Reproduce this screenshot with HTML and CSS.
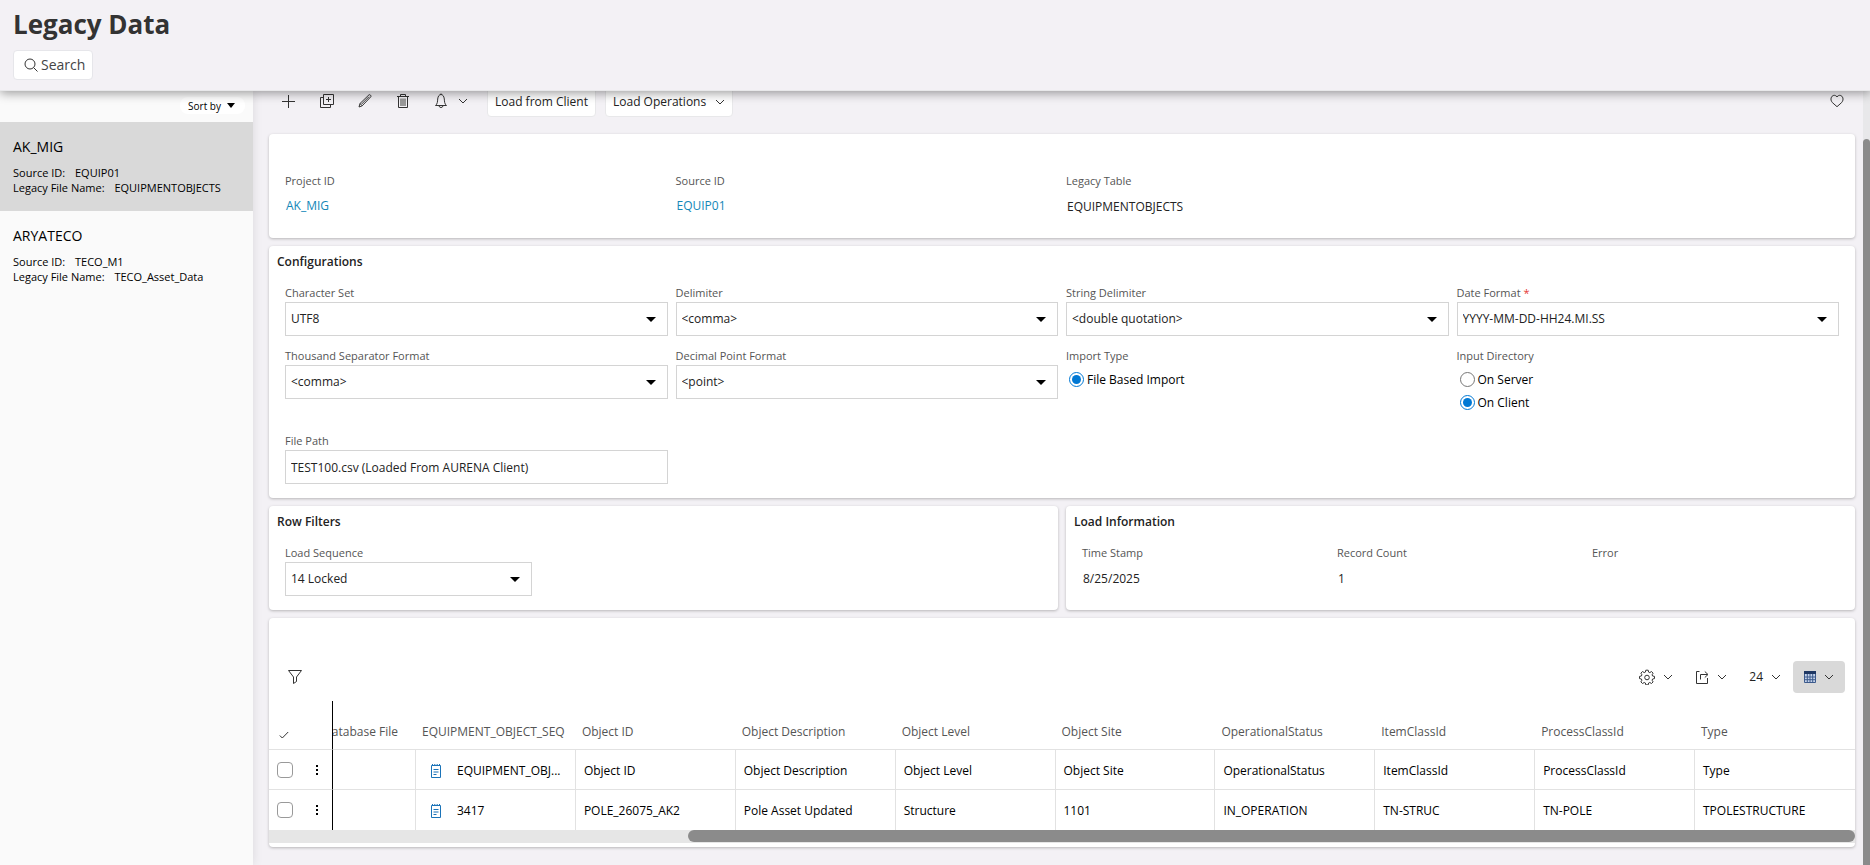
FILE: index.html
```html
<!DOCTYPE html>
<html lang="en">
  <head>
    <meta charset="utf-8">
    <title>Legacy Data</title>
    <link rel="stylesheet" href="styles.css">
  </head>

  <body>
    <!-- Shared icon shapes -->
    <svg class="sprite" aria-hidden="true">
      <symbol id="chevron" viewBox="0 0 10 6">
        <path d="M1 1l4 4 4-4" />
      </symbol>
      <symbol id="note" viewBox="0 0 12 16">
        <path d="M1.500 2.500h9v12h-9z" />
        <path d="M2.500 1v2M4.800 1v2M7.200 1v2M9.500 1v2M3.500 6.500h5M3.500 9h5M3.500 11.500h3" />
      </symbol>
    </svg>

    <header class="page-header">
      <h1>Legacy Data</h1>
      <button type="button" class="search-button">
        <svg class="icon" width="14" height="14" viewBox="0 0 14 14">
          <circle cx="6" cy="6" r="5" />
          <path d="M9.600 9.600L13.500 13.500" />
        </svg>
        Search
      </button>
    </header>

    <div class="page-body">
      <aside class="sidebar">
        <div class="sort-row">
          <button type="button" class="sort-button">Sort by <span class="caret"></span></button>
        </div>
        <ul class="record-list">
          <li class="selected">
            <h2>AK_MIG</h2>
            <p><span>Source ID:</span> EQUIP01</p>
            <p><span>Legacy File Name:</span> EQUIPMENTOBJECTS</p>
          </li>
          <li>
            <h2>ARYATECO</h2>
            <p><span>Source ID:</span> TECO_M1</p>
            <p><span>Legacy File Name:</span> TECO_Asset_Data</p>
          </li>
        </ul>
      </aside>

      <main>
        <div class="command-bar">
          <button type="button" class="icon-button" aria-label="New">
            <svg class="icon" width="16" height="16" viewBox="0 0 16 16">
              <path d="M7.500 2v13M1 8.500h13" />
            </svg>
          </button>
          <button type="button" class="icon-button" aria-label="Duplicate">
            <svg class="icon" width="16" height="16" viewBox="0 0 16 16">
              <path d="M4.500 1.500h10v10h-10z" />
              <path d="M4.500 4.500h-3v10h10v-3M9.500 4v5M7 6.500h5" />
            </svg>
          </button>
          <button type="button" class="icon-button" aria-label="Edit">
            <svg class="icon" width="16" height="16" viewBox="0 0 16 16">
              <path d="M2 14l1-3.500L12 1.800c.8-.7 2.600 1 1.900 1.900L5.200 12.800z" />
              <path d="M3 10.500l2.200 2.300M4.500 11.200l7.500-7.500" />
            </svg>
          </button>
          <button type="button" class="icon-button" aria-label="Delete">
            <svg class="icon" width="16" height="16" viewBox="0 0 16 16">
              <path d="M2 3.500h12M5.500 3V1.500h5V3M3.500 4v10.500h9V4" />
              <path class="solid" d="M5 5.500h6v7.500H5z" />
            </svg>
          </button>
          <button type="button" class="icon-button notify-button" aria-label="Notifications">
            <svg class="icon" width="16" height="16" viewBox="0 0 16 16">
              <path d="M2.500 12.500c2-1.500 2-4 2.200-6.500C5 3.200 6.300 1.500 8 1.500s3 1.700 3.300 4.500c.2 2.500.2 5 2.200 6.500z" />
              <path d="M6 13c.3 2 3.700 2 4 0M8 .5v1" />
            </svg>
            <svg class="icon" width="10" height="6"><use href="#chevron" /></svg>
          </button>
          <button type="button" class="command-button first">Load from Client</button>
          <button type="button" class="command-button">
            Load Operations
            <svg class="icon" width="10" height="6"><use href="#chevron" /></svg>
          </button>
          <button type="button" class="favorite-button" aria-label="Favorite">
            <svg class="icon" width="14" height="14" viewBox="0 0 14 14">
              <path d="M7 12.700L2.300 8.500C-1 4.500 2.500.2 5.500 1.600L7 2.800l1.500-1.200c3-1.400 6.500 2.900 3.200 6.900z" />
            </svg>
          </button>
        </div>

        <section class="card">
          <div class="fields four no-title">
            <div class="field">
              <span class="label">Project ID</span>
              <a href="#" class="value">AK_MIG</a>
            </div>
            <div class="field">
              <span class="label">Source ID</span>
              <a href="#" class="value">EQUIP01</a>
            </div>
            <div class="field">
              <span class="label">Legacy Table</span>
              <span class="value">EQUIPMENTOBJECTS</span>
            </div>
          </div>
        </section>

        <section class="card">
          <h3>Configurations</h3>
          <div class="fields four">
            <div class="field">
              <label for="character_set">Character Set</label>
              <div class="select-box">
                <select id="character_set"><option>UTF8</option></select>
              </div>
            </div>
            <div class="field">
              <label for="delimiter">Delimiter</label>
              <div class="select-box">
                <select id="delimiter"><option>&lt;comma&gt;</option></select>
              </div>
            </div>
            <div class="field">
              <label for="string_delimiter">String Delimiter</label>
              <div class="select-box">
                <select id="string_delimiter"><option>&lt;double quotation&gt;</option></select>
              </div>
            </div>
            <div class="field">
              <label for="date_format">Date Format <span class="required">*</span></label>
              <div class="select-box">
                <select id="date_format"><option>YYYY-MM-DD-HH24.MI.SS</option></select>
              </div>
            </div>
            <div class="field">
              <label for="thousand_separator">Thousand Separator Format</label>
              <div class="select-box">
                <select id="thousand_separator"><option>&lt;comma&gt;</option></select>
              </div>
            </div>
            <div class="field">
              <label for="decimal_point">Decimal Point Format</label>
              <div class="select-box">
                <select id="decimal_point"><option>&lt;point&gt;</option></select>
              </div>
            </div>
            <div class="field">
              <span class="label">Import Type</span>
              <div class="radios">
                <label><input type="radio" name="import_type" checked>File Based Import</label>
              </div>
            </div>
            <div class="field">
              <span class="label">Input Directory</span>
              <div class="radios">
                <label><input type="radio" name="input_directory">On Server</label>
                <label><input type="radio" name="input_directory" checked>On Client</label>
              </div>
            </div>
            <div class="field">
              <label for="file_path">File Path</label>
              <input type="text" id="file_path" value="TEST100.csv (Loaded From AURENA Client)">
            </div>
          </div>
        </section>

        <div class="card-row">
          <section class="card">
            <h3>Row Filters</h3>
            <div class="fields three">
              <div class="field">
                <label for="load_sequence">Load Sequence</label>
                <div class="select-box">
                  <select id="load_sequence"><option>14 Locked</option></select>
                </div>
              </div>
            </div>
          </section>
          <section class="card">
            <h3>Load Information</h3>
            <div class="fields three">
              <div class="field">
                <span class="label">Time Stamp</span>
                <span class="value">8/25/2025</span>
              </div>
              <div class="field">
                <span class="label">Record Count</span>
                <span class="value">1</span>
              </div>
              <div class="field">
                <span class="label">Error</span>
              </div>
            </div>
          </section>
        </div>

        <section class="card table-card">
          <div class="table-bar">
            <button type="button" class="filter-button" aria-label="Filter">
              <svg class="icon" width="16" height="16" viewBox="0 0 16 16">
                <path d="M1.500 1.500h13L9.500 8v4.500l-3 2V8z" />
              </svg>
            </button>
            <button type="button" aria-label="Settings">
              <svg class="icon" width="16" height="16" viewBox="0 0 16 16">
                <path d="M6.800 1.200h2.400l.4 1.900 1.200.5 1.700-1.100 1.600 1.700-1 1.600.5 1.200 1.900.4v2.200l-1.900.4-.5 1.200 1 1.700-1.600 1.600-1.700-1-1.200.5-.4 1.900H6.800l-.4-1.900-1.200-.5-1.700 1-1.600-1.600 1-1.700-.5-1.200-1.900-.4V7.400L2.400 7l.5-1.200-1-1.600 1.600-1.700 1.700 1.100 1.200-.5z" />
                <circle cx="8" cy="8.500" r="2.300" />
              </svg>
              <svg class="icon" width="10" height="6"><use href="#chevron" /></svg>
            </button>
            <button type="button" aria-label="Export">
              <svg class="icon" width="14" height="14" viewBox="0 0 14 14">
                <path d="M4.500 1.500h-3v12h11V8" />
                <path d="M5.500 9.500V4.500h7M9.800 1.500l3.200 3-3.200 3" />
              </svg>
              <svg class="icon" width="10" height="6"><use href="#chevron" /></svg>
            </button>
            <button type="button">
              24
              <svg class="icon" width="10" height="6"><use href="#chevron" /></svg>
            </button>
            <button type="button" class="active" aria-label="Table view">
              <svg class="grid-icon" width="12" height="12" viewBox="0 0 12 12">
                <path d="M.5.5h11v11H.5zM.5 6h11M.5 8.700h11M3.300 3v8.500M6 3v8.500M8.700 3v8.500" />
                <path class="head" d="M0 0h12v3H0z" />
              </svg>
              <svg class="icon" width="10" height="6"><use href="#chevron" /></svg>
            </button>
          </div>

          <table>
            <colgroup>
              <col class="select-col">
              <col class="cut-col">
              <col span="9">
            </colgroup>
            <thead>
              <tr>
                <th class="select-cell">
                  <svg class="icon" width="10" height="8" viewBox="0 0 10 8">
                    <path d="M.8 4.500l2.500 2.500L9.200 1" />
                  </svg>
                </th>
                <th class="cut-cell"><div>Database File</div></th>
                <th>EQUIPMENT_OBJECT_SEQ</th>
                <th>Object ID</th>
                <th>Object Description</th>
                <th>Object Level</th>
                <th>Object Site</th>
                <th>OperationalStatus</th>
                <th>ItemClassId</th>
                <th>ProcessClassId</th>
                <th>Type</th>
              </tr>
            </thead>
            <tbody>
              <tr>
                <td class="select-cell">
                  <div>
                    <input type="checkbox" aria-label="Select row">
                    <svg class="dots" width="4" height="12" viewBox="0 0 4 12">
                      <path d="M1 1h2v2H1zM1 5h2v2H1zM1 9h2v2H1z" />
                    </svg>
                  </div>
                </td>
                <td></td>
                <td class="note-cell">
                  <div>
                    <svg class="note" width="12" height="16"><use href="#note" /></svg>
                    EQUIPMENT_OBJ...
                  </div>
                </td>
                <td>Object ID</td>
                <td>Object Description</td>
                <td>Object Level</td>
                <td>Object Site</td>
                <td>OperationalStatus</td>
                <td>ItemClassId</td>
                <td>ProcessClassId</td>
                <td>Type</td>
              </tr>
              <tr>
                <td class="select-cell">
                  <div>
                    <input type="checkbox" aria-label="Select row">
                    <svg class="dots" width="4" height="12" viewBox="0 0 4 12">
                      <path d="M1 1h2v2H1zM1 5h2v2H1zM1 9h2v2H1z" />
                    </svg>
                  </div>
                </td>
                <td></td>
                <td class="note-cell">
                  <div>
                    <svg class="note" width="12" height="16"><use href="#note" /></svg>
                    3417
                  </div>
                </td>
                <td>POLE_26075_AK2</td>
                <td>Pole Asset Updated</td>
                <td>Structure</td>
                <td>1101</td>
                <td>IN_OPERATION</td>
                <td>TN-STRUC</td>
                <td>TN-POLE</td>
                <td>TPOLESTRUCTURE</td>
              </tr>
            </tbody>
          </table>
          <div class="h-scroll"><div class="thumb"></div></div>
        </section>
      </main>

      <div class="v-scroll"><div class="thumb"></div></div>
    </div>
  </body>
</html>
```

FILE: styles.css
```css
* {
  box-sizing: border-box;
}

body {
  margin: 0;
  height: 100vh;
  display: flex;
  flex-direction: column;
  overflow: hidden;
  background: #f3f1f5;
  color: #222;
  font: 12px/16px "Open Sans", sans-serif;
}

h1,
h2,
h3,
p,
ul {
  margin: 0;
  padding: 0;
}

button,
input,
select {
  font: inherit;
  color: inherit;
}

button {
  display: flex;
  align-items: center;
  padding: 0;
  border: none;
  background: none;
}

.sprite {
  display: none;
}

.icon {
  flex: none;
  fill: none;
  stroke: #333;
  stroke-width: 1;
}

.icon .solid {
  fill: #999;
  stroke: none;
}

.caret {
  border: 4px solid transparent;
  border-top: 5px solid #000;
  border-bottom: none;
}

/* Header */
.page-header {
  position: relative;
  z-index: 1;
  flex: none;
  height: 91px;
  padding: 8px 13px;
  border-bottom: 1px solid #e8e8ea;
  background: #f3f1f5;
  box-shadow: 0 2px 10px rgba(0, 0, 0, 0.4);
}

h1 {
  margin-bottom: 10px;
  color: #333;
  font-size: 26px;
  line-height: 32px;
}

.search-button {
  gap: 3px;
  height: 30px;
  padding: 0 7px 0 10px;
  border: 1px solid #e6e6ea;
  border-radius: 4px;
  background: #fff;
  color: #444;
  font-size: 14px;
}

.page-body {
  flex: 1;
  display: flex;
  min-height: 0;
}

/* Sidebar */
.sidebar {
  flex: none;
  width: 253px;
  background: #fafafa;
  color: #000;
  box-shadow: 0 0 10px rgba(0, 0, 0, 0.1);
}

.sort-row {
  display: flex;
  justify-content: flex-end;
  height: 31px;
  padding: 6px 8px;
}

.sort-button {
  gap: 6px;
  height: 17px;
  padding: 0 10px 0 8px;
  border-radius: 8px;
  background: #fff;
  font-size: 10px;
}

.record-list {
  list-style: none;
}

.record-list li {
  height: 89px;
  padding: 15px 13px;
  font-size: 11px;
  line-height: 15px;
}

.record-list .selected {
  background: #d9d9d9;
}

.record-list h2 {
  margin-bottom: 8px;
  font-size: 14px;
  font-weight: normal;
  line-height: 20px;
}

.record-list span {
  margin-right: 7px;
}

/* Main area, scrolled down a few pixels under the header */
main {
  flex: 1;
  min-width: 0;
  padding: 0 8px 0 16px;
  overflow: hidden;
}

.command-bar {
  display: flex;
  margin: -6px 0 17px;
  padding-left: 1px;
}

.icon-button {
  justify-content: center;
  width: 38px;
  height: 32px;
}

.notify-button {
  justify-content: flex-start;
  gap: 9px;
  width: 56px;
  padding-left: 11px;
}

.command-button {
  gap: 9px;
  height: 32px;
  margin-right: 9px;
  padding: 2px 7px 0;
  border: 1px solid #e8e8ea;
  border-radius: 4px;
  background: #fff;
}

.command-button.first {
  margin-left: 9px;
}

.favorite-button {
  margin-left: auto;
  padding: 0 11px;
}

.card {
  margin-bottom: 8px;
  padding-bottom: 14px;
  border-radius: 4px;
  background: #fff;
  box-shadow: 0 1px 3px rgba(0, 0, 0, 0.25);
}

.card-row {
  display: grid;
  grid-template-columns: 1fr 1fr;
  gap: 8px;
}

h3 {
  padding: 6px 8px 12px;
  font-size: 12px;
  font-weight: 600;
  line-height: 20px;
}

.fields {
  display: grid;
  gap: 11px 8px;
  padding: 0 16px;
}

.four {
  grid-template-columns: repeat(4, 1fr);
}

.three {
  grid-template-columns: repeat(3, 1fr);
}

.no-title {
  padding-top: 38px;
}

.field > label,
.label {
  display: block;
  color: #555;
  font-size: 11px;
  line-height: 18px;
}

.required {
  color: #e53935;
}

.value {
  display: block;
  padding-left: 1px;
  line-height: 34px;
}

a {
  color: #1387b8;
  text-decoration: none;
}

a.value {
  line-height: 32px;
}

.select-box {
  position: relative;
}

.select-box::after {
  content: "";
  position: absolute;
  top: 15px;
  right: 12px;
  border: 5px solid transparent;
  border-top-color: #000;
  border-bottom: none;
  pointer-events: none;
}

select,
input[type="text"] {
  display: block;
  width: 100%;
  height: 34px;
  padding: 0 5px;
  border: 1px solid #d4d4d4;
  border-radius: 0;
  background: #fff;
  appearance: none;
}

.radios {
  padding: 3px 0 7px;
  color: #000;
}

.radios label {
  display: flex;
  align-items: center;
  height: 23px;
}

input[type="radio"] {
  width: 15px;
  height: 15px;
  margin: 0 3px;
  accent-color: #0078d4;
}

/* Table */
.table-card {
  padding-bottom: 4px;
  overflow: hidden;
}

.table-bar {
  display: flex;
  align-items: center;
  justify-content: flex-end;
  gap: 2px;
  padding: 43px 10px 8px;
}

.table-bar button {
  gap: 8px;
  height: 32px;
  padding: 0 10px;
}

.table-bar .filter-button {
  margin-right: auto;
  padding: 0 8px;
}

.table-bar .active {
  padding: 0 11px;
  border-radius: 4px;
  background: #d9d9d9;
}

.grid-icon {
  fill: #c5d3ea;
  stroke: #3c5a8c;
  stroke-width: 1;
}

.grid-icon .head {
  fill: #1f3864;
  stroke: none;
}

table {
  width: 100%;
  border-collapse: separate;
  border-spacing: 0;
  table-layout: fixed;
}

.select-col {
  width: 64px;
}

.cut-col {
  width: 83px;
}

th,
td {
  text-align: left;
  white-space: nowrap;
}

th {
  height: 49px;
  padding: 14px 6px 0;
  border-bottom: 1px solid #e2e2e2;
  color: #555;
  font-weight: normal;
}

td {
  height: 40px;
  padding: 2px 8px 0;
  border-right: 1px solid #e2e2e2;
  border-bottom: 1px solid #e2e2e2;
  color: #000;
}

td:last-child {
  border-right: none;
}

tbody tr:last-child td {
  border-bottom: none;
}

th.select-cell,
td.select-cell {
  padding-top: 0;
  border-right: 1px solid #000;
}

th.select-cell {
  padding: 20px 10px 0;
}

td > div {
  display: flex;
  align-items: center;
}

.select-cell div {
  gap: 22px;
}

th.cut-cell {
  padding-right: 18px;
  padding-left: 0;
}

.cut-cell div {
  display: flex;
  justify-content: flex-end;
  overflow: hidden;
}

input[type="checkbox"] {
  flex: none;
  width: 16px;
  height: 16px;
  margin: 0;
  border: 1px solid #999;
  border-radius: 4px;
  appearance: none;
}

.dots {
  fill: #000;
}

td.note-cell {
  padding-left: 14px;
}

.note-cell div {
  gap: 15px;
}

.note {
  flex: none;
  fill: none;
  stroke: #1a73b8;
  stroke-width: 1;
}

/* Scrollbars */
.h-scroll {
  height: 13px;
  padding-left: 419px;
  background: #e6e6e6;
}

.h-scroll .thumb {
  height: 12px;
  border-radius: 6px;
  background: #8b8b8b;
}

.v-scroll {
  flex: none;
  width: 7px;
  padding-top: 48px;
  background: #e8e8ea;
}

.v-scroll .thumb {
  height: 100%;
  border-radius: 4px 4px 0 0;
  background: #8b8b8b;
}
```
